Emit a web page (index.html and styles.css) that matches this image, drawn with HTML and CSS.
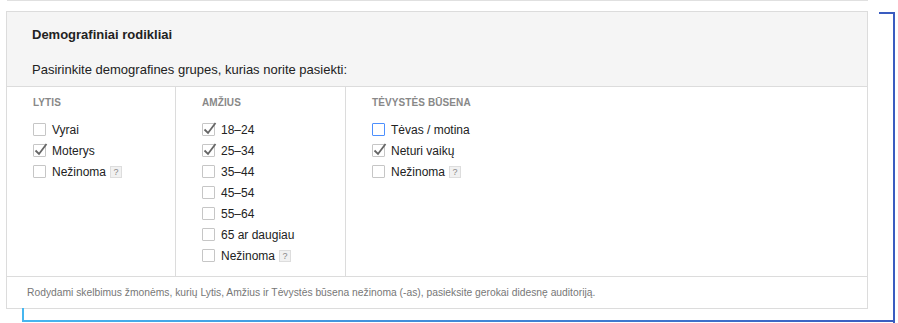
FILE: index.html
```html
<!DOCTYPE html>
<html lang="lt">
<head>
  <meta charset="UTF-8">
  <title>Demografiniai rodikliai</title>
  <link rel="stylesheet" href="styles.css">
</head>
<body>
  <div class="page">
    <div class="prev-edge"></div>
    <div class="panel">
      <div class="panel-head">
        <div class="panel-title">Demografiniai rodikliai</div>
        <div class="panel-sub">Pasirinkite demografines grupes, kurias norite pasiekti:</div>
      </div>
      <div class="cols">
        <div class="col">
          <div class="col-title">Lytis</div>
          <div class="opt"><span class="box"></span>Vyrai</div>
          <div class="opt"><span class="box checked"></span>Moterys</div>
          <div class="opt"><span class="box"></span>Nežinoma<span class="help">?</span></div>
        </div>
        <div class="col">
          <div class="col-title">Amžius</div>
          <div class="opt"><span class="box checked"></span>18–24</div>
          <div class="opt"><span class="box checked"></span>25–34</div>
          <div class="opt"><span class="box"></span>35–44</div>
          <div class="opt"><span class="box"></span>45–54</div>
          <div class="opt"><span class="box"></span>55–64</div>
          <div class="opt"><span class="box"></span>65 ar daugiau</div>
          <div class="opt"><span class="box"></span>Nežinoma<span class="help">?</span></div>
        </div>
        <div class="col">
          <div class="col-title">Tėvystės būsena</div>
          <div class="opt"><span class="box focused"></span>Tėvas / motina</div>
          <div class="opt"><span class="box checked"></span>Neturi vaikų</div>
          <div class="opt"><span class="box"></span>Nežinoma<span class="help">?</span></div>
        </div>
      </div>
      <div class="panel-foot">Rodydami skelbimus žmonėms, kurių Lytis, Amžius ir Tėvystės būsena nežinoma (-as), pasieksite gerokai didesnę auditoriją.</div>
    </div>
    <div class="bracket-right"></div>
    <div class="bracket-bottom"></div>
  </div>
  <script>
    // draw the tick inside every checked box
    document.querySelectorAll('.box.checked').forEach(function(box) {
      box.innerHTML = '<svg class="tick" width="16" height="16" viewBox="0 0 16 16"><path d="M2.5 8.5 L6 12 L13.5 2" fill="none" stroke="#666" stroke-width="1.8"/></svg>';
    });
  </script>
</body>
</html>
```

FILE: styles.css
```css
body {
  margin: 0;
  font-family: 'Liberation Sans', Arial, sans-serif;
  color: #222;
  background: #fff;
}
.page {
  position: relative;
  width: 862px;
  height: 323px;
  padding-left: 6px;
}
.prev-edge {
  border-bottom: 1px solid #e0e0e0;
  margin-left: 1px;
}
.panel {
  margin-top: 10px;
  border: 1px solid #dcdcdc;
  background: #fff;
}
.panel-head {
  background: #f5f5f5;
  padding: 15px 24px 9px 25px;
  border-bottom: 1px solid #dcdcdc;
}
.panel-title {
  font-size: 13px;
  font-weight: bold;
  line-height: 16px;
  color: #222;
}
.panel-sub {
  margin-top: 19px;
  font-size: 13px;
  line-height: 15px;
  height: 15px;
  overflow: hidden;
  color: #222;
}
.cols {
  display: grid;
  grid-template-columns: 168px 170px 1fr;
}
.col {
  padding: 10px 0 10px 26px;
}
.col + .col {
  border-left: 1px solid #dcdcdc;
}
.col-title {
  font-size: 10px;
  font-weight: bold;
  line-height: 12px;
  text-transform: uppercase;
  color: #888;
  letter-spacing: 0.1px;
  margin-bottom: 10px;
}
.opt {
  display: flex;
  align-items: center;
  height: 21px;
  font-size: 12px;
  color: #222;
}
.box {
  position: relative;
  flex: none;
  width: 13px;
  height: 13px;
  box-sizing: border-box;
  border: 1px solid #c6c6c6;
  border-radius: 1px;
  background: #fff;
  margin-right: 6px;
}
.box.focused {
  border-color: #4d90fe;
}
.tick {
  position: absolute;
  left: -1px;
  top: -3px;
  overflow: visible;
}
.help {
  display: inline-flex;
  align-items: center;
  justify-content: center;
  width: 12px;
  height: 12px;
  box-sizing: border-box;
  margin-left: 4px;
  background: #f1f1f1;
  border: 1px solid #ddd;
  font-size: 9px;
  color: #888;
}
.panel-foot {
  border-top: 1px solid #dcdcdc;
  padding: 9px 20px;
  font-size: 10.3px;
  line-height: 13px;
  color: #777;
}
.bracket-right {
  position: absolute;
  left: 879px;
  top: 12px;
  width: 14px;
  height: 310px;
  border-top: 2px solid #3a5cc0;
  border-right: 2px solid #3a5cc0;
}
.bracket-bottom {
  position: absolute;
  left: 22px;
  top: 308px;
  width: 871px;
  height: 12px;
  border-left: 2px solid #46b6ef;
  border-bottom: 2px solid #46b6ef;
  border-image: linear-gradient(to right, #46b6ef, #3a5cc0) 1;
}
```
